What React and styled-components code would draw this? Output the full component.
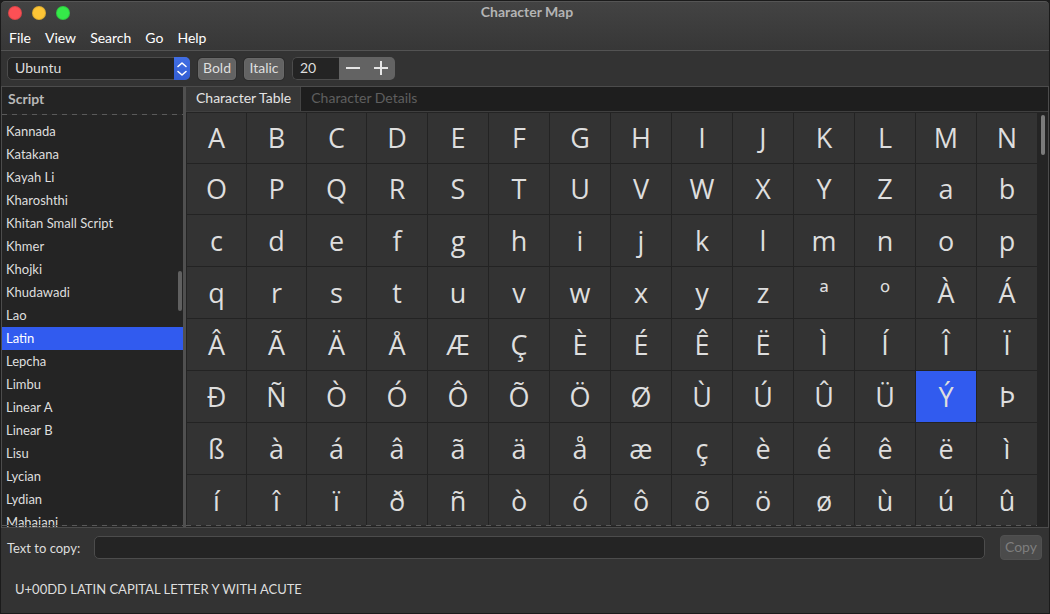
import React, { useState } from "react";
import styled, { createGlobalStyle, css } from "styled-components";

const GlobalStyle = createGlobalStyle`
  *, *::before, *::after { box-sizing: border-box; }
  body { margin: 0; background: #1c1c1c; }
  button, input, select { font: inherit; color: inherit; margin: 0; }
`;

const Window = styled.div`
  display: flex;
  flex-direction: column;
  height: 100vh;
  overflow: hidden;
  border: 1px solid #1b1b1b;
  border-radius: 5px 5px 0 0;
  background: #333;
  color: #dedede;
  font: 13px/20px "Lato", "Liberation Sans", sans-serif;
`;

const Header = styled.header`
  background: linear-gradient(#434343, #373737);
  border-top: 1px solid #555;
  border-bottom: 1px solid #535353;
  border-radius: 4px 4px 0 0;
`;

const TitleBar = styled.div`
  display: grid;
  grid-template-columns: 80px 1fr 76px;
  align-items: center;
  height: 22px;
`;

const Lights = styled.div`
  display: flex;
  gap: 10px;
  padding-left: 7px;
`;

const Light = styled.button`
  width: 14px;
  height: 14px;
  padding: 0;
  border: 1px solid rgba(0, 0, 0, 0.12);
  border-radius: 50%;
  background: ${(p) => p.$color};
`;

const Title = styled.h1`
  margin: 0;
  padding-bottom: 2px;
  font-size: 14px;
  line-height: 18px;
  font-weight: 700;
  text-align: center;
  color: #b4b4b4;
`;

const MenuBar = styled.nav`
  display: flex;
  gap: 14px;
  height: 26px;
  padding: 2px 8px 0;
`;

const MenuItem = styled.button`
  padding: 0;
  border: 0;
  background: none;
  font-size: 14px;
  line-height: 20px;
  color: #fff;
`;

const Toolbar = styled.div`
  display: flex;
  align-items: center;
  gap: 8px;
  padding: 5px 6px 5px;
  height: 35px;
  font-size: 14px;
`;

const Combo = styled.div`
  position: relative;
  width: 183px;
  height: 23px;
`;

const FontSelect = styled.select`
  appearance: none;
  display: block;
  width: 100%;
  height: 100%;
  padding: 0 24px 1px 7px;
  border: 1px solid #4c4c4c;
  border-radius: 5px;
  background: #242424;
`;

const ComboArrow = styled.span`
  position: absolute;
  top: 0;
  right: 0;
  display: flex;
  align-items: center;
  justify-content: center;
  width: 16px;
  height: 100%;
  border-radius: 0 5px 5px 0;
  background: linear-gradient(#416ee4, #335ed4);
  pointer-events: none;
`;

const PushButton = styled.button`
  height: 22px;
  width: ${(p) => p.$width}px;
  padding: 0 0 2px;
  line-height: 18px;
  border: 1px solid #686868;
  border-radius: 4px;
  background: #636363;
  box-shadow: 0 0 0 1px #2c2c2c;
`;

const Spin = styled.div`
  display: flex;
  height: 23px;
  width: 103px;
  border-radius: 5px;
  overflow: hidden;
`;

const SpinInput = styled.input`
  width: 47px;
  padding: 0 7px 1px;
  border: 1px solid #4c4c4c;
  border-right: 0;
  border-radius: 5px 0 0 5px;
  background: #242424;
`;

const SpinButton = styled.button`
  display: flex;
  align-items: center;
  justify-content: center;
  flex: 1;
  padding: 0 0 1px;
  border: 0;
  background: #636363;
`;

const Main = styled.main`
  display: flex;
  flex: 1;
  min-height: 0;
  border: 1px solid #4c4c4c;
  background: #242424;
`;

const undershoot = css`
  content: "";
  position: absolute;
  left: 0;
  right: 0;
  height: 1px;
  background: repeating-linear-gradient(90deg, #5a5a5a 0 5px, #2b2b2b 5px 10px);
`;

const Sidebar = styled.section`
  display: flex;
  flex-direction: column;
  width: 184px;
  flex: none;
  border-right: 3px solid #505050;
`;

const SidebarTitle = styled.h2`
  margin: 0;
  padding: 2px 6px 5px;
  font-size: 14px;
  line-height: 20px;
  font-weight: 700;
  color: #b8b8b8;
`;

const ScriptScroller = styled.div`
  position: relative;
  flex: 1;
  min-height: 0;
  overflow: hidden;
  &::before { ${undershoot} top: 0; }
  &::after { ${undershoot} bottom: 1px; }
`;

const ScriptList = styled.ul`
  margin: 0;
  padding: 6px 0 0;
  list-style: none;
`;

const ScriptItem = styled.button`
  display: block;
  width: 100%;
  height: 23px;
  padding: 0 4px 1px;
  border: 0;
  text-align: left;
  color: ${(p) => (p.$selected ? "#fff" : "#dedede")};
  background: ${(p) => (p.$selected ? "#315bef" : "transparent")};
`;

const ScrollThumb = styled.span`
  position: absolute;
  top: ${(p) => p.$top};
  right: ${(p) => p.$right}px;
  width: 4px;
  height: 40px;
  border-radius: 2px;
  background: ${(p) => p.$color};
`;

const Content = styled.section`
  display: flex;
  flex-direction: column;
  flex: 1;
  min-width: 0;
`;

const Tabs = styled.div`
  display: flex;
  height: 25px;
  border-bottom: 1px solid #404040;
  background: #1e1e1e;
`;

const Tab = styled.button`
  padding: 0 9px 2px 10px;
  border: 0;
  border-right: 1px solid ${(p) => (p.$active ? "#444" : "transparent")};
  font-size: 14px;
  color: ${(p) => (p.$active ? "#e4e4e4" : "#5f5f5f")};
  background: ${(p) => (p.$active ? "#373737" : "transparent")};
`;

const CharScroller = styled.div`
  position: relative;
  flex: 1;
  min-height: 0;
  overflow: hidden;
  padding: 1px 11px 0 1px;
  &::after { ${undershoot} right: 11px; bottom: 1px; }
`;

const CharTable = styled.table`
  width: 100%;
  table-layout: fixed;
  border-collapse: separate;
  border-spacing: 0;
  background: #333;
  font: 27px/36px "Open Sans", "Noto Sans", sans-serif;
`;

const CharRow = styled.tr`
  height: 52px;
  &:nth-child(-n + 2) { height: 51px; }
`;

const CharCell = styled.td`
  padding: 0;
  text-align: center;
  border-right: 1px solid #232323;
  border-bottom: 1px solid #232323;
  background: ${(p) => (p.$selected ? "#315bef" : "transparent")};
  background-clip: padding-box;
  &:nth-child(-n + 3) { width: 60px; }
  &:last-child { width: 60px; border-right: 0; }
`;

const Footer = styled.footer`
  padding: 7px 7px 14px 6px;
`;

const CopyRow = styled.div`
  display: flex;
  align-items: center;
  gap: 15px;
`;

const CopyLabel = styled.label`
  width: 72px;
  white-space: nowrap;
`;

const CopyInput = styled.input`
  flex: 1;
  min-width: 0;
  height: 23px;
  padding: 0 6px;
  border: 1px solid #4c4c4c;
  border-radius: 5px;
  background: #242424;
`;

const CopyButton = styled.button`
  width: 42px;
  height: 25px;
  padding: 0 0 1px;
  border: 1px solid #505050;
  border-radius: 4px;
  background: #4b4b4b;
  font-size: 14px;
  color: #7e7e7e;
`;

const Status = styled.p`
  margin: 19px 0 0;
  padding-left: 8px;
`;

const scripts = [
  "Kannada", "Katakana", "Kayah Li", "Kharoshthi", "Khitan Small Script", "Khmer",
  "Khojki", "Khudawadi", "Lao", "Latin", "Lepcha", "Limbu", "Linear A", "Linear B",
  "Lisu", "Lycian", "Lydian", "Mahajani",
];

const rows = [
  "ABCDEFGHIJKLMN",
  "OPQRSTUVWXYZab",
  "cdefghijklmnop",
  "qrstuvwxyzªºÀÁ",
  "ÂÃÄÅÆÇÈÉÊËÌÍÎÏ",
  "ÐÑÒÓÔÕÖØÙÚÛÜÝÞ",
  "ßàáâãäåæçèéêëì",
  "íîïðñòóôõöøùúû",
];

export default function App() {
  const [script, setScript] = useState("Latin");
  const [char, setChar] = useState("Ý");
  const [size, setSize] = useState(20);
  const [text, setText] = useState("");

  return (
    <Window>
      <GlobalStyle />
      <Header>
        <TitleBar>
          <Lights>
            <Light $color="#fc5055" aria-label="Close" />
            <Light $color="#fdc536" aria-label="Minimize" />
            <Light $color="#35ea49" aria-label="Maximize" />
          </Lights>
          <Title>Character Map</Title>
        </TitleBar>
        <MenuBar>
          {["File", "View", "Search", "Go", "Help"].map((m) => (
            <MenuItem key={m}>{m}</MenuItem>
          ))}
        </MenuBar>
      </Header>
      <Toolbar>
        <Combo>
          <FontSelect aria-label="Font">
            <option>Ubuntu</option>
          </FontSelect>
          <ComboArrow>
            <svg width="12" height="16" viewBox="0 0 12 16" fill="none" stroke="#fff" strokeWidth="1.6" strokeLinecap="round" strokeLinejoin="round">
              <path d="M2 5.5 6 2l4 3.500M2 10.500 6 14l4-3.500" />
            </svg>
          </ComboArrow>
        </Combo>
        <PushButton $width={38}>Bold</PushButton>
        <PushButton $width={40}>Italic</PushButton>
        <Spin>
          <SpinInput aria-label="Font size" value={size} onChange={(e) => setSize(e.target.value)} />
          <SpinButton aria-label="Decrease size" onClick={() => setSize(Number(size) - 1)}>
            <svg width="14" height="14" stroke="#e6e6e6" strokeWidth="2"><path d="M0 7h14" /></svg>
          </SpinButton>
          <SpinButton aria-label="Increase size" onClick={() => setSize(Number(size) + 1)}>
            <svg width="14" height="14" stroke="#e6e6e6" strokeWidth="2"><path d="M0 7h14M7 0v14" /></svg>
          </SpinButton>
        </Spin>
      </Toolbar>
      <Main>
        <Sidebar>
          <SidebarTitle>Script</SidebarTitle>
          <ScriptScroller>
            <ScriptList>
              {scripts.map((s) => (
                <li key={s}>
                  <ScriptItem $selected={s === script} onClick={() => setScript(s)}>{s}</ScriptItem>
                </li>
              ))}
            </ScriptList>
            <ScrollThumb $top="38%" $right={1} $color="#606060" />
          </ScriptScroller>
        </Sidebar>
        <Content>
          <Tabs role="tablist">
            <Tab role="tab" aria-selected="true" $active>Character Table</Tab>
            <Tab role="tab" aria-selected="false">Character Details</Tab>
          </Tabs>
          <CharScroller>
            <CharTable>
              <tbody>
                {rows.map((row) => (
                  <CharRow key={row}>
                    {[...row].map((c) => (
                      <CharCell key={c} $selected={c === char} onClick={() => setChar(c)}>{c}</CharCell>
                    ))}
                  </CharRow>
                ))}
              </tbody>
            </CharTable>
            <ScrollThumb $top="3px" $right={3} $color="#7b7b7b" />
          </CharScroller>
        </Content>
      </Main>
      <Footer>
        <CopyRow>
          <CopyLabel htmlFor="copy-text">Text to copy:</CopyLabel>
          <CopyInput id="copy-text" value={text} onChange={(e) => setText(e.target.value)} />
          <CopyButton disabled={!text}>Copy</CopyButton>
        </CopyRow>
        <Status>U+00DD LATIN CAPITAL LETTER Y WITH ACUTE</Status>
      </Footer>
    </Window>
  );
}
